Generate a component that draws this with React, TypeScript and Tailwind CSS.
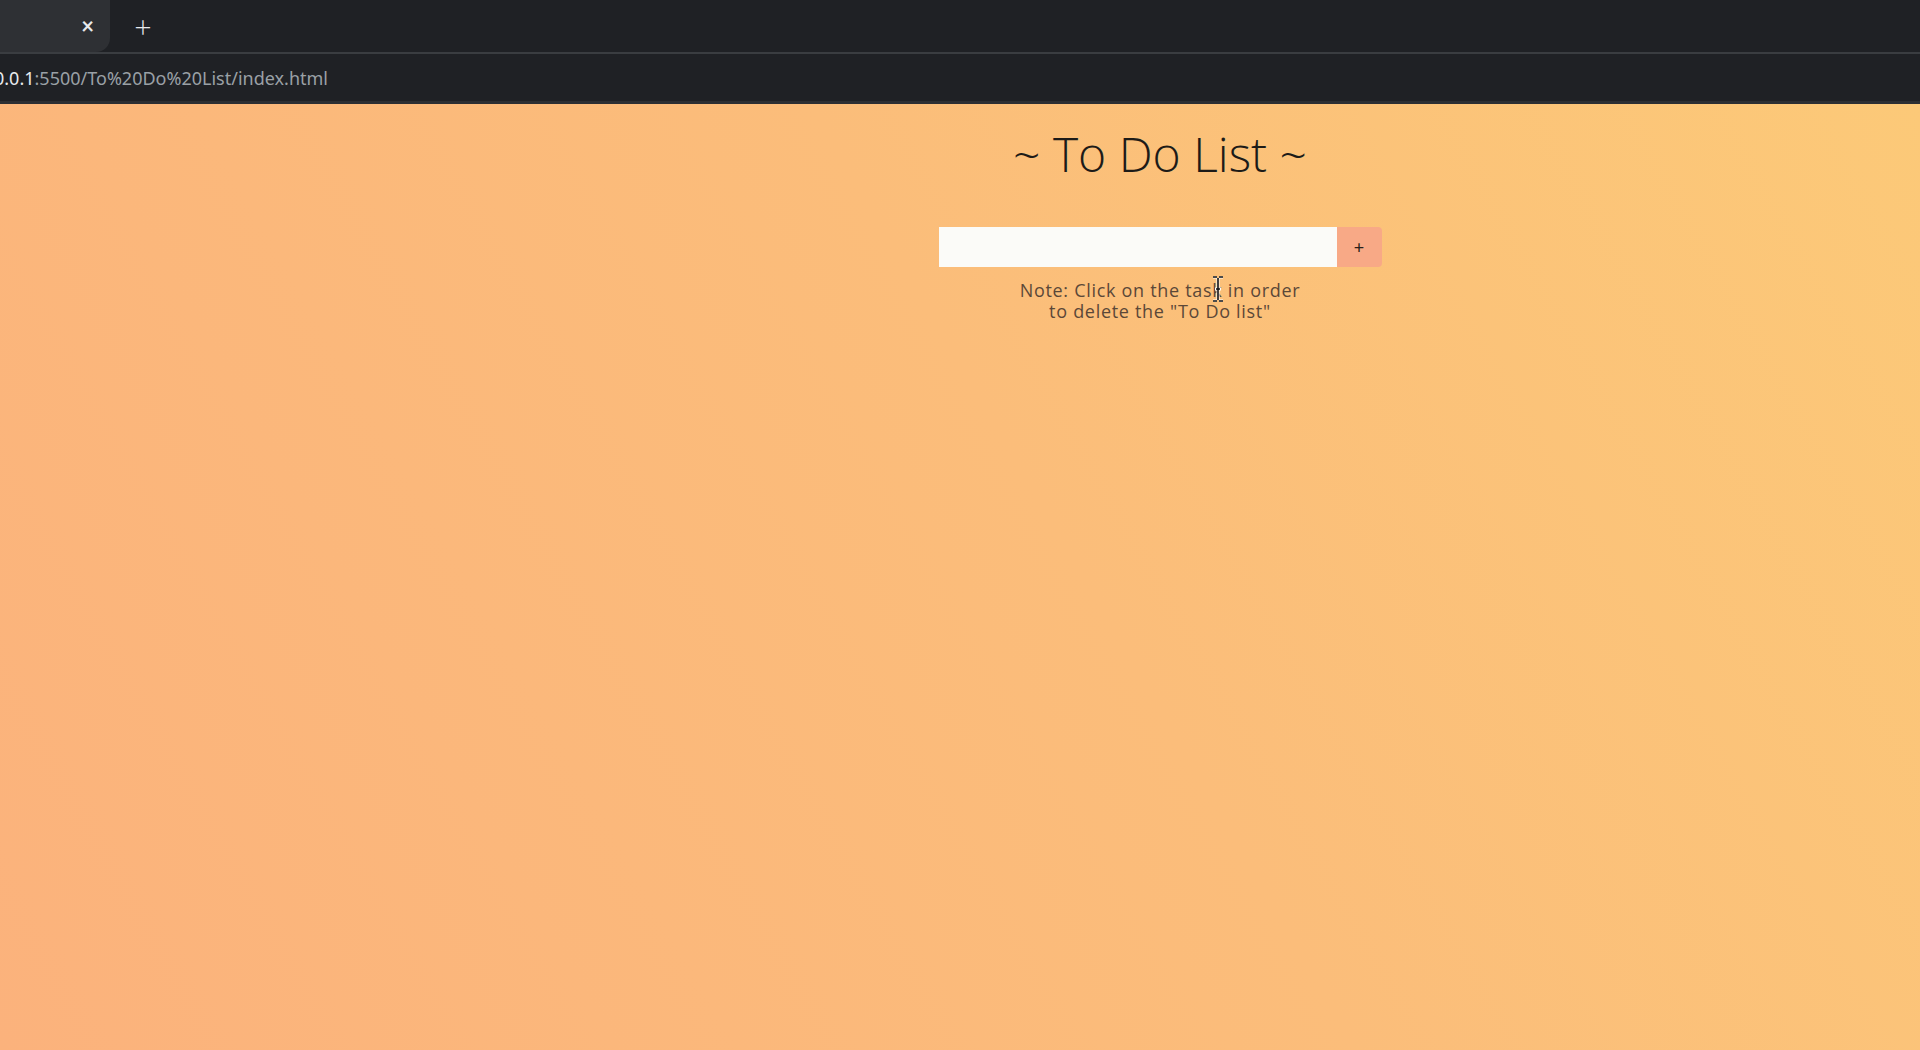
import React, { useState } from 'react';

export default function App() {
  const [task, setTask] = useState('');

  return (
    <div className="flex h-screen w-full flex-col overflow-hidden bg-[#202124] font-['Lato',sans-serif]">
      {/* Browser tab strip */}
      <div className="flex h-[52px] items-end bg-[#1f2125]">
        <div className="flex h-[52px] w-[110px] items-center justify-end rounded-br-[14px] bg-[#2e3034] pr-[16px]">
          <span className="text-[22px] font-bold leading-none text-[#e8eaed]">×</span>
        </div>
        <div className="flex h-[52px] w-[66px] items-center justify-center">
          <span className="text-[30px] font-light leading-none text-[#e8eaed]">+</span>
        </div>
      </div>
      <div className="h-[2px] bg-[#3a3d41]" />

      {/* Address bar */}
      <div className="flex h-[50px] items-center border-b-[3px] border-[#2c2f33] bg-[#1f2125] font-['Noto_Sans',sans-serif] text-[18px] leading-none">
        <span className="ml-[-6px] text-[#e8eaed]">0.0.1</span>
        <span className="text-[#9aa0a6]">:5500/To%20Do%20List/index.html</span>
      </div>

      {/* Page */}
      <main className="relative flex-1 bg-[linear-gradient(60deg,#fbb27c_0%,#fbbd7a_55%,#fcc978_100%)]">
        <div className="flex flex-col items-center pl-[400px] pt-[18px]">
          <h1 className="font-['Open_Sans',sans-serif] text-[48px] font-light leading-[64px] text-[#1d1b18]">
            ~ To Do List ~
          </h1>

          <div className="mt-[41px] flex h-[40px]">
            <input
              value={task}
              onChange={(e) => setTask(e.target.value)}
              className="h-[40px] w-[398px] bg-[#fbfbf8] px-3 text-[16px] outline-none"
            />
            <button className="flex h-[40px] w-[45px] items-center justify-center rounded-r-[4px] bg-[#f8a986] text-[18px] leading-none text-[#2a1f1a]">
              +
            </button>
          </div>

          <p className="mt-[13px] text-center font-['Open_Sans',sans-serif] text-[18px] leading-[21px] tracking-[0.7px] text-[#5b4838]">
            Note: Click on the task in order
            <br />
            to delete the "To Do list"
          </p>
        </div>

        {/* I-beam text cursor */}
        <svg
          className="absolute left-[1211px] top-[172px]"
          width="14"
          height="26"
          viewBox="0 0 14 26"
        >
          <path d="M2 1 H6 M8 1 H12 M7 2 V24 M2 25 H6 M8 25 H12 M4 13 H10" stroke="#ffffff" strokeWidth="3" fill="none" />
          <path d="M2 1 H6 M8 1 H12 M7 2 V24 M2 25 H6 M8 25 H12 M5 13 H9" stroke="#111111" strokeWidth="1.6" fill="none" />
        </svg>
      </main>
    </div>
  );
}
